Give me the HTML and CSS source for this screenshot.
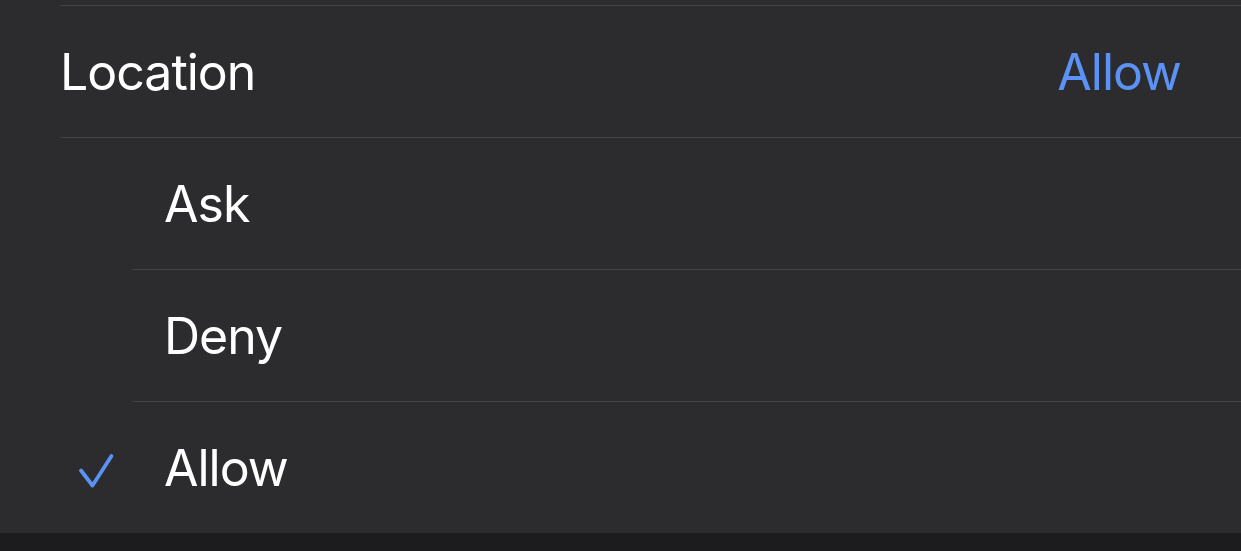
FILE: index.html
```
<!DOCTYPE html>
<html>
<head>
<meta charset="utf-8">
<link rel="stylesheet" href="styles.css">
</head>
<body>
<div class="group">
  <div class="header">
    <span class="label">Location</span>
    <span class="value">Allow</span>
  </div>
  <div class="options">
    <div class="option">
      <span class="check"></span>
      <span class="label">Ask</span>
    </div>
    <div class="option">
      <span class="check"></span>
      <span class="label">Deny</span>
    </div>
    <div class="option">
      <span class="check">
        <svg width="40" height="40" viewBox="0 0 40 40"><path d="M5 18.5 L16.5 33.5 L35.5 4" fill="none" stroke="#5b92f5" stroke-width="3.8" stroke-linecap="round" stroke-linejoin="round"/></svg>
      </span>
      <span class="label">Allow</span>
    </div>
  </div>
</div>
</body>
</html>
```
FILE: styles.css
```
html, body {
  margin: 0;
  padding: 0;
  background: #1c1c1e;
}
body {
  font-family: Inter, "Noto Sans", sans-serif;
  color: #ffffff;
}
.group {
  background: #2c2c2e;
  height: 533px;
  padding-top: 5px;
  box-sizing: border-box;
}
.header,
.option {
  display: flex;
  align-items: center;
  height: 132px;
  box-sizing: border-box;
  font-size: 50px;
  letter-spacing: -1px;
}
.header {
  margin-left: 60px;
  padding-right: 60px;
  justify-content: space-between;
  border-top: 1px solid #434346;
  border-bottom: 1px solid #434346;
  height: 133px;
}
.header .label {
  margin-left: 0;
}
.value {
  color: #5b92f5;
}
.options {
  padding-left: 132px;
}
.option {
  position: relative;
  height: 132px;
}
.option + .option {
  border-top: 1px solid #434346;
}
.option:first-child {
  height: 131px;
}
.option .label {
  margin-left: 32px;
}
.check {
  position: absolute;
  left: -56px;
  top: 50px;
  width: 40px;
  height: 40px;
}
.check svg {
  display: block;
}
```
